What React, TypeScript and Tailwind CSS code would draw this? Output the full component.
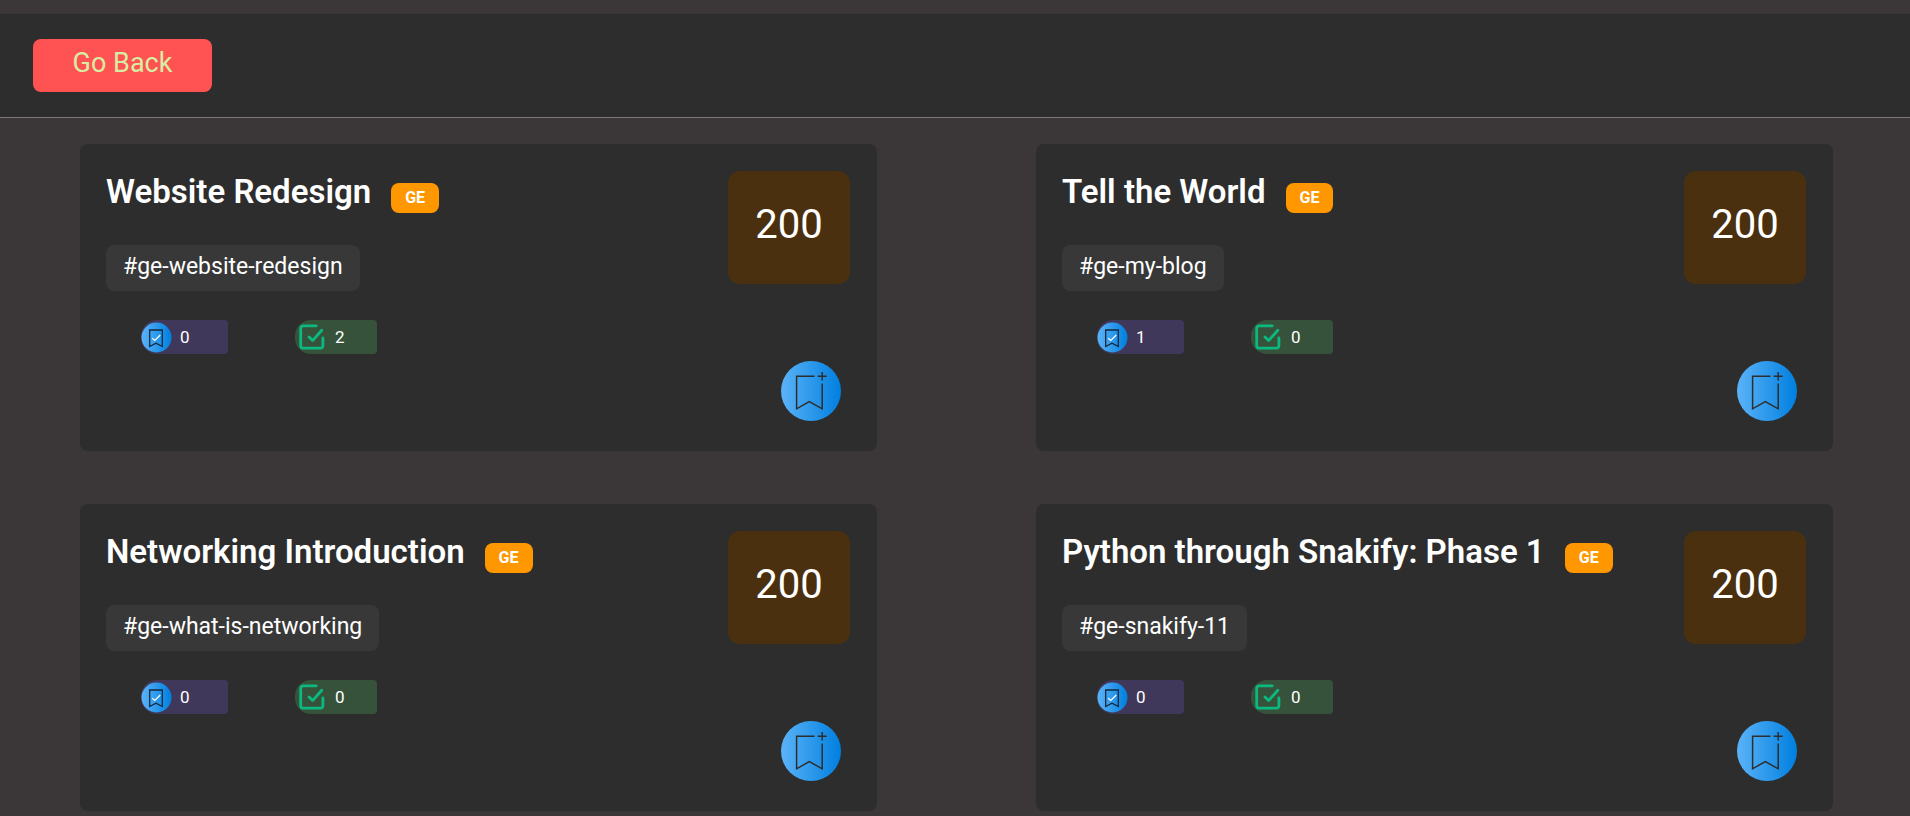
type Project = {
  title: string;
  channel: string;
  points: number;
  saved: number;
  completed: number;
};

const projects: Project[] = [
  { title: "Website Redesign", channel: "#ge-website-redesign", points: 200, saved: 0, completed: 2 },
  { title: "Tell the World", channel: "#ge-my-blog", points: 200, saved: 1, completed: 0 },
  { title: "Networking Introduction", channel: "#ge-what-is-networking", points: 200, saved: 0, completed: 0 },
  { title: "Python through Snakify: Phase 1", channel: "#ge-snakify-11", points: 200, saved: 0, completed: 0 },
];

function BlueGradient({ id }: { id: string }) {
  return (
    <defs>
      <linearGradient id={id} x1="0" y1="0" x2="1" y2="0">
        <stop offset="0" stopColor="#5bb3f8" />
        <stop offset="1" stopColor="#007fdf" />
      </linearGradient>
    </defs>
  );
}

function SavedIcon({ id }: { id: string }) {
  return (
    <svg className="size-[31px] shrink-0" viewBox="0 0 31 31" fill="none" aria-hidden="true">
      <BlueGradient id={id} />
      <circle cx="15.5" cy="15.5" r="15" fill={`url(#${id})`} />
      <path d="M8.7 8H21.3V24.5L15 21.2L8.7 24.5Z" stroke="#12283c" strokeWidth="1.3" />
      <path d="M11.3 16.2L13.8 18.5L19.3 13" stroke="#fff" strokeWidth="1.2" />
    </svg>
  );
}

function CompletedIcon() {
  return (
    <svg
      className="size-[26px] shrink-0"
      viewBox="0 0 26 26"
      fill="none"
      stroke="#0bb980"
      strokeWidth="2.8"
      strokeLinecap="round"
      strokeLinejoin="round"
      aria-hidden="true"
    >
      <path d="M17.2 1.9H4A2.3 2.3 0 0 0 1.7 4.2V21.8A2.3 2.3 0 0 0 4 24.1H21.6A2.3 2.3 0 0 0 23.9 21.8V14" />
      <path d="M10 13L13.6 16.6L22.8 6.2" />
    </svg>
  );
}

function SaveButtonIcon({ id }: { id: string }) {
  return (
    <svg className="size-full" viewBox="0 0 60 60" fill="none" aria-hidden="true">
      <BlueGradient id={id} />
      <circle cx="30" cy="30" r="30" fill={`url(#${id})`} />
      <path d="M33.5 15.3H15.6V47.8L28.3 40.5L41.2 47.8V22.5" stroke="#2d2d2d" strokeWidth="1.5" />
      <path d="M41.2 11V19.5M36.7 15.3H45.7" stroke="#2d2d2d" strokeWidth="1.5" />
    </svg>
  );
}

function ProjectCard({ project, index }: { project: Project; index: number }) {
  return (
    <article className="flex min-h-[307px] justify-between rounded-lg bg-[#2d2d2d] pt-[27px] pr-[27px] pb-[30px] pl-[26px]">
      <div className="flex flex-col items-start">
        <div className="flex h-[42px] items-end gap-5">
          <h2 className="pb-px text-[33px] leading-10 font-semibold">{project.title}</h2>
          <span className="rounded-lg bg-[#ff9800] px-[14px] text-base leading-[30px] font-bold">GE</span>
        </div>
        <span className="mt-8 rounded-lg bg-[#383838] px-[17px] pb-[3px] text-[23px] leading-[43px]">
          {project.channel}
        </span>
        <div className="mt-[29px] ml-[35px] flex gap-[67px] text-[17px]">
          <div className="flex h-[34px] w-[87px] items-center gap-2 rounded-l-2xl rounded-r-sm bg-[#40385a]">
            <SavedIcon id={`saved-${index}`} />
            <span className="pt-0.5">{project.saved}</span>
          </div>
          <div className="flex h-[34px] w-[82px] items-center gap-[10px] rounded-l-2xl rounded-r-sm bg-[#37523a] pl-1">
            <CompletedIcon />
            <span className="pt-0.5">{project.completed}</span>
          </div>
        </div>
      </div>
      <div className="flex flex-col items-end justify-between">
        <div className="flex h-[113px] w-[122px] items-center justify-center rounded-xl bg-[#4b300f] pb-[5px] text-[40px]">
          {project.points}
        </div>
        <button type="button" aria-label={`Save ${project.title}`} className="mr-[9px] size-[60px] rounded-full">
          <SaveButtonIcon id={`save-${index}`} />
        </button>
      </div>
    </article>
  );
}

export default function App() {
  return (
    <div className="min-h-screen bg-[#3b3738] pt-[14px] pb-[6px] font-['Roboto','Liberation_Sans',sans-serif] text-white">
      <header className="flex border-b border-[#7a7878] bg-[#2d2d2d] px-[33px] py-[25px]">
        <button
          type="button"
          className="h-[53px] w-[179px] rounded-lg bg-[#ff5252] pb-[5px] text-[27px] text-[#d6eda3]"
        >
          Go Back
        </button>
      </header>
      <main className="grid grid-cols-2 gap-x-[159px] gap-y-[53px] pt-[26px] pr-[77px] pl-20">
        {projects.map((project, index) => (
          <ProjectCard key={project.channel} project={project} index={index} />
        ))}
      </main>
    </div>
  );
}
